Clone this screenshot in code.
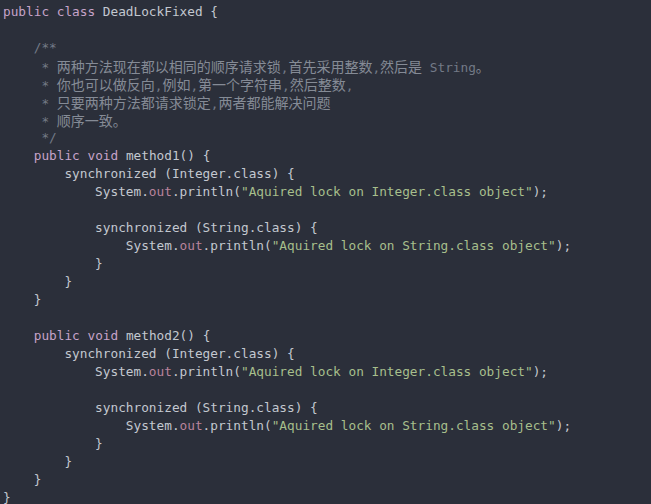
import React from "react";

const K = ({ children }: { children: React.ReactNode }) => <span className="text-[#c6a3c9]">{children}</span>;
const O = ({ children }: { children: React.ReactNode }) => <span className="text-[#b9839c]">{children}</span>;
const S = ({ children }: { children: React.ReactNode }) => <span className="text-[#a7bf8c]">{children}</span>;
const C = ({ children }: { children: React.ReactNode }) => <span className="text-[#737a87]">{children}</span>;
const Z = ({ children }: { children: React.ReactNode }) => (
  <span className="text-[#858b96] text-[14px] font-['Noto_Sans_CJK_SC',sans-serif]">{children}</span>
);

const Line = ({ children }: { children?: React.ReactNode }) => (
  <div className="h-[18px] leading-[18px] whitespace-pre">{children ?? " "}</div>
);

function Method({ name }: { name: string }) {
  return (
    <>
      <Line>
        {"    "}<K>public</K> <K>void</K> {name}() {"{"}
      </Line>
      <Line>{"        synchronized (Integer.class) {"}</Line>
      <Line>
        {"            System."}<O>out</O>{".println("}<S>"Aquired lock on Integer.class object"</S>{");"}
      </Line>
      <Line />
      <Line>{"            synchronized (String.class) {"}</Line>
      <Line>
        {"                System."}<O>out</O>{".println("}<S>"Aquired lock on String.class object"</S>{");"}
      </Line>
      <Line>{"            }"}</Line>
      <Line>{"        }"}</Line>
      <Line>{"    }"}</Line>
    </>
  );
}

export default function App() {
  return (
    <div className="w-[651px] h-[504px] overflow-hidden bg-[#2b2f3a] pl-[3px] pt-[3px] text-[#c3c8d0] font-['DejaVu_Sans_Mono',monospace] text-[12.75px]">
      <Line>
        <K>public</K> <K>class</K> DeadLockFixed {"{"}
      </Line>
      <Line />
      <Line><C>{"    /**"}</C></Line>
      <Line>
        <C>{"     * "}</C><Z>两种方法现在都以相同的顺序请求锁</Z><C>,</C><Z>首先采用整数</Z><C>,</C><Z>然后是</Z><C>{" String"}</C><Z>。</Z>
      </Line>
      <Line>
        <C>{"     * "}</C><Z>你也可以做反向</Z><C>,</C><Z>例如</Z><C>,</C><Z>第一个字符串</Z><C>,</C><Z>然后整数</Z><C>,</C>
      </Line>
      <Line>
        <C>{"     * "}</C><Z>只要两种方法都请求锁定</Z><C>,</C><Z>两者都能解决问题</Z>
      </Line>
      <Line>
        <C>{"     * "}</C><Z>顺序一致。</Z>
      </Line>
      <Line><C>{"     */"}</C></Line>
      <Method name="method1" />
      <Line />
      <Method name="method2" />
      <Line>{"}"}</Line>
    </div>
  );
}
